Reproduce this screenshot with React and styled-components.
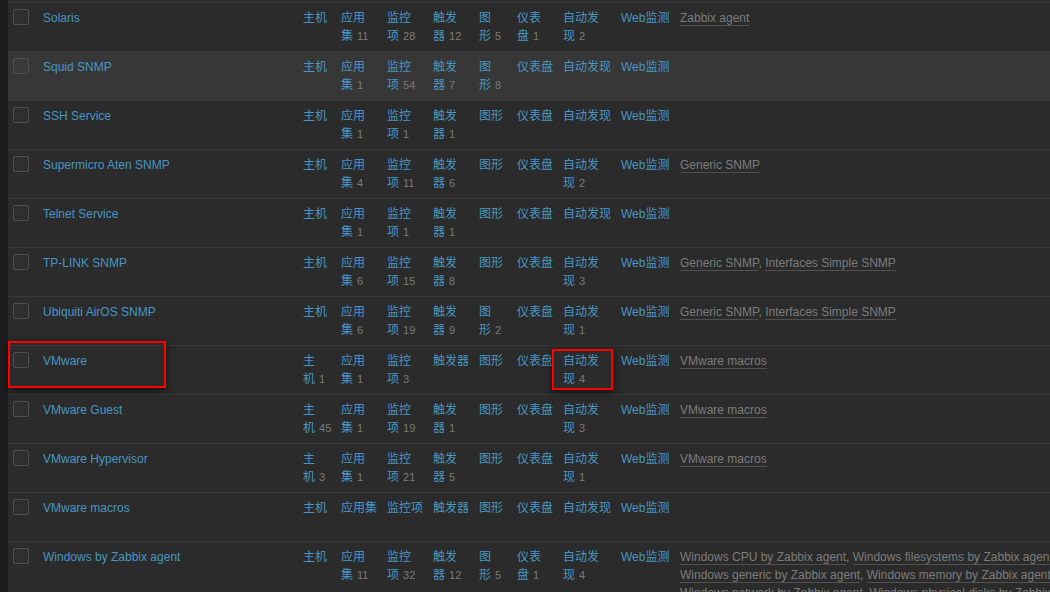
import React from "react";
import styled, { createGlobalStyle } from "styled-components";

const GlobalStyle = createGlobalStyle`
  html, body {
    margin: 0;
    padding: 0;
    overflow: hidden;
    background: #1d1d1d;
  }
  body {
    font-family: "Liberation Sans", Arial, "Noto Sans CJK SC", sans-serif;
    font-size: 12px;
    line-height: 18px;
  }
`;

const Page = styled.div`
  margin-left: 8px;
  padding-top: 2px;
  background: #2b2b2b;
  min-height: 592px;
  width: 1140px;
`;

const Table = styled.table`
  border-collapse: separate;
  border-spacing: 0;
  table-layout: fixed;
  width: 1127px;
`;

const Row = styled.tr`
  background: ${(p) => (p.$hover ? "#373737" : "transparent")};
`;

const Cell = styled.td`
  position: relative;
  vertical-align: top;
  height: 36px;
  padding: 6px 4px 6px 5px;
  border-top: 1px solid #383838;
  color: #787878;
  ${(p) => p.$hover && "border-top-color: #373737;"}
`;

const CheckBox = styled.span`
  display: block;
  width: 16px;
  height: 16px;
  box-sizing: border-box;
  border: 1px solid #4f4f4f;
  border-radius: 2px;
  background: rgba(255, 255, 255, 0.02);
`;

const NameLink = styled.a`
  color: #4796c4;
  text-decoration: none;
  cursor: pointer;
`;

const ActionLink = styled.a`
  color: #4796c4;
  text-decoration: none;
  cursor: pointer;
`;

const NoWrap = styled.span`
  white-space: nowrap;
`;

const Count = styled.span`
  color: #7a7a7a;
  font-size: 11px;
  margin-left: 4px;
`;

const TemplateLink = styled.a`
  color: #7b7b7b;
  text-decoration: none;
  border-bottom: 1px solid #505050;
  white-space: nowrap;
  cursor: pointer;
`;

const Sep = styled.span`
  color: #7b7b7b;
`;

const Highlight = styled.div`
  position: absolute;
  box-sizing: border-box;
  border: 2px solid #ff0000;
  box-shadow: 0 2px 7px rgba(0, 0, 0, 0.65);
  pointer-events: none;
  z-index: 2;
  left: ${(p) => p.$left}px;
  top: ${(p) => p.$top}px;
  width: ${(p) => p.$w}px;
  height: ${(p) => p.$h}px;
`;

const LABELS = ["主机", "应用集", "监控项", "触发器", "图形", "仪表盘", "自动发现", "Web监测"];
const WIDTHS = [30, 260, 38, 46, 46, 46, 38, 46, 58, 59, 460];

const rows = [
  { name: "Solaris", c: [null, 11, 28, 12, 5, 1, 2], t: ["Zabbix agent"] },
  { name: "Squid SNMP", c: [null, 1, 54, 7, 8, null, null], t: [], hover: true },
  { name: "SSH Service", c: [null, 1, 1, 1, null, null, null], t: [] },
  { name: "Supermicro Aten SNMP", c: [null, 4, 11, 6, null, null, 2], t: ["Generic SNMP"] },
  { name: "Telnet Service", c: [null, 1, 1, 1, null, null, null], t: [] },
  { name: "TP-LINK SNMP", c: [null, 6, 15, 8, null, null, 3], t: ["Generic SNMP", "Interfaces Simple SNMP"] },
  { name: "Ubiquiti AirOS SNMP", c: [null, 6, 19, 9, 2, null, 1], t: ["Generic SNMP", "Interfaces Simple SNMP"] },
  { name: "VMware", c: [1, 1, 3, null, null, null, 4], t: ["VMware macros"], mark: true },
  { name: "VMware Guest", c: [45, 1, 19, 1, null, null, 3], t: ["VMware macros"] },
  { name: "VMware Hypervisor", c: [3, 1, 21, 5, null, null, 1], t: ["VMware macros"] },
  { name: "VMware macros", c: [null, null, null, null, null, null, null], t: [] },
  {
    name: "Windows by Zabbix agent",
    c: [null, 11, 32, 12, 5, 1, 4],
    t: [
      "Windows CPU by Zabbix agent",
      "Windows filesystems by Zabbix agent",
      "Windows generic by Zabbix agent",
      "Windows memory by Zabbix agent",
      "Windows network by Zabbix agent",
      "Windows physical disks by Zabbix agent",
      "Windows services by Zabbix agent",
    ],
  },
];

function Action({ label, count }) {
  if (count == null) return <ActionLink>{label}</ActionLink>;
  const head = label.slice(0, -1);
  const last = label.slice(-1);
  return (
    <ActionLink>
      {head}
      <NoWrap>
        {last}
        <Count>{count}</Count>
      </NoWrap>
    </ActionLink>
  );
}

function Templates({ list }) {
  return list.map((t, i) => (
    <React.Fragment key={t}>
      {i > 0 && <Sep>, </Sep>}
      <TemplateLink>{t}</TemplateLink>
    </React.Fragment>
  ));
}

export default function App() {
  return (
    <>
      <GlobalStyle />
      <Page>
        <Table>
          <colgroup>
            {WIDTHS.map((w, i) => (
              <col key={i} style={{ width: w }} />
            ))}
          </colgroup>
          <tbody>
            {rows.map((r) => (
              <Row key={r.name} $hover={r.hover}>
                <Cell $hover={r.hover}>
                  <CheckBox />
                  {r.mark && <Highlight $left={0} $top={-5} $w={158} $h={47} />}
                </Cell>
                <Cell $hover={r.hover}>
                  <NameLink>{r.name}</NameLink>
                </Cell>
                {LABELS.map((l, i) => (
                  <Cell key={l} $hover={r.hover}>
                    <Action label={l} count={i < 7 ? r.c[i] : null} />
                    {r.mark && i === 6 && <Highlight $left={-6} $top={3} $w={61} $h={41} />}
                  </Cell>
                ))}
                <Cell $hover={r.hover}>
                  <Templates list={r.t} />
                </Cell>
              </Row>
            ))}
          </tbody>
        </Table>
      </Page>
    </>
  );
}
